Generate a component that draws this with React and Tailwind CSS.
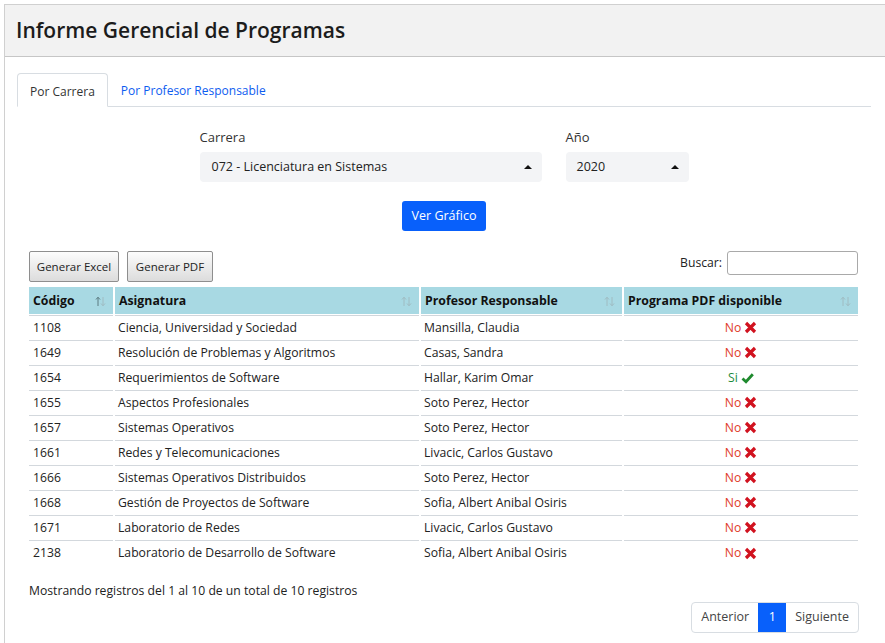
import React from "react";

const FONT = { fontFamily: '"Open Sans", "Noto Sans", sans-serif' };

const ROWS = [
  ["1108", "Ciencia, Universidad y Sociedad", "Mansilla, Claudia", false],
  ["1649", "Resolución de Problemas y Algoritmos", "Casas, Sandra", false],
  ["1654", "Requerimientos de Software", "Hallar, Karim Omar", true],
  ["1655", "Aspectos Profesionales", "Soto Perez, Hector", false],
  ["1657", "Sistemas Operativos", "Soto Perez, Hector", false],
  ["1661", "Redes y Telecomunicaciones", "Livacic, Carlos Gustavo", false],
  ["1666", "Sistemas Operativos Distribuidos", "Soto Perez, Hector", false],
  ["1668", "Gestión de Proyectos de Software", "Sofia, Albert Anibal Osiris", false],
  ["1671", "Laboratorio de Redes", "Livacic, Carlos Gustavo", false],
  ["2138", "Laboratorio de Desarrollo de Software", "Sofia, Albert Anibal Osiris", false],
];

function SortIcon({ active }) {
  return (
    <svg width="11" height="11" viewBox="0 0 11 11" className="shrink-0">
      <path d="M3 10V1.5M1 3.5L3 1.2L5 3.5" stroke={active ? "#5b7a80" : "#9fbcc2"} strokeWidth="1" fill="none" />
      <path d="M8 1v8.5M6 7.5L8 9.8L10 7.5" stroke="#9fbcc2" strokeWidth="1" fill="none" />
    </svg>
  );
}

function Cross() {
  return (
    <svg width="13" height="13" viewBox="0 0 13 13" className="inline-block">
      <path d="M2 2L11 11M11 2L2 11" stroke="#d1121f" strokeWidth="3.2" strokeLinecap="butt" />
    </svg>
  );
}

function Check() {
  return (
    <svg width="13" height="12" viewBox="0 0 13 12" className="inline-block">
      <path d="M1.5 6.5L5 9.8L11.8 2.2" stroke="#1f8a2e" strokeWidth="2.8" fill="none" />
    </svg>
  );
}

function Caret() {
  return <span className="w-0 h-0 border-x-[4px] border-x-transparent border-b-[4px] border-b-[#111]" />;
}

export default function App() {
  const heads = [
    ["Código", "w-[84px]", true],
    ["Asignatura", "w-[304px]", false],
    ["Profesor Responsable", "w-[201px]", false],
    ["Programa PDF disponible", "", false],
  ];

  return (
    <div className="min-h-screen bg-white pt-1 pl-1 overflow-hidden text-[#222]" style={FONT}>
      <div className="w-[900px] border-l border-t border-[#d0d0d0]">
        <div className="h-[52px] bg-[#f2f2f2] border-b border-[#c6c6c6] flex items-center px-[11px]">
          <h1 className="text-[21px] font-semibold text-[#1c1c1c]">Informe Gerencial de Programas</h1>
        </div>

        <div className="pl-[12px] pt-[16px] pb-4">
          <div className="w-[854px]">
            <div className="flex border-b border-[#d8dde2] h-[34px] text-[12px]">
              <div className="px-[12px] pt-[3px] flex items-center border border-[#d8dde2] border-b-white rounded-t-[4px] -mb-px bg-white text-[#333]">
                Por Carrera
              </div>
              <div className="px-[13px] pt-[3px] flex items-center text-[#0d5cf0]">Por Profesor Responsable</div>
            </div>

            <div className="flex justify-center gap-[24px] pt-[21px]">
              <div className="flex flex-col w-[342px]">
                <label className="text-[13px] text-[#333] h-[24px]">Carrera</label>
                <div className="h-[30px] bg-[#f3f4f6] rounded-[4px] flex items-center justify-between pl-[12px] pr-[10px] text-[12.5px]">
                  <span>072 - Licenciatura en Sistemas</span>
                  <Caret />
                </div>
              </div>
              <div className="flex flex-col w-[123px]">
                <label className="text-[13px] text-[#333] h-[24px]">Año</label>
                <div className="h-[30px] bg-[#f3f4f6] rounded-[4px] flex items-center justify-between pl-[11px] pr-[10px] text-[12.5px]">
                  <span>2020</span>
                  <Caret />
                </div>
              </div>
            </div>

            <div className="flex justify-center pt-[19px]">
              <button className="h-[30px] px-[10px] bg-[#0860fb] text-white text-[12.5px] rounded-[3px]">Ver Gráfico</button>
            </div>

            <div className="px-[12px] pt-[20px]">
              <div className="flex items-start justify-between">
                <div className="flex gap-[8px]">
                  <button className="h-[31px] w-[90px] border border-[#8e8e8e] rounded-[2px] bg-gradient-to-b from-[#fcfcfc] to-[#dcdcdc] text-[11.5px] text-[#222]">
                    Generar Excel
                  </button>
                  <button className="h-[31px] w-[86px] border border-[#8e8e8e] rounded-[2px] bg-gradient-to-b from-[#fcfcfc] to-[#dcdcdc] text-[11.5px] text-[#222]">
                    Generar PDF
                  </button>
                </div>
                <div className="flex items-center gap-[5px] text-[12.2px] mr-[1px]">
                  <span>Buscar:</span>
                  <div className="w-[131px] h-[24px] border border-[#a9a9a9] rounded-[3px] bg-white" />
                </div>
              </div>

              <table className="mt-[5px] w-[833px] -mx-[2px] border-separate border-spacing-x-[2px] border-spacing-y-0 text-[12.2px]">
                <thead>
                  <tr>
                    {heads.map(([h, w, active]) => (
                      <th key={h} className={`${w} h-[29px] bg-[#a8d9e3] border-b border-[#d0d6db] shadow-[inset_0_-1px_0_#fff] text-left font-bold text-[12.3px] text-[#111] p-0`}>
                        <div className="flex items-center justify-between pl-[4px] pr-[7px]">
                          <span>{h}</span>
                          <SortIcon active={active} />
                        </div>
                      </th>
                    ))}
                  </tr>
                </thead>
                <tbody>
                  {ROWS.map(([c, a, p, ok], i) => {
                    const b = i < ROWS.length - 1 ? "border-b border-[#d3d8dd]" : "";
                    return (
                      <tr key={c}>
                        <td className={`h-[25px] pl-[4px] ${b}`}>{c}</td>
                        <td className={`h-[25px] pl-[3px] ${b}`}>{a}</td>
                        <td className={`h-[25px] pl-[3px] ${b}`}>{p}</td>
                        <td className={`h-[25px] text-center ${b}`}>
                          {ok ? (
                            <span className="inline-flex items-center gap-[3px] text-[#1b8a3a]">Si <Check /></span>
                          ) : (
                            <span className="inline-flex items-center gap-[3px] text-[#e03a2a]">No <Cross /></span>
                          )}
                        </td>
                      </tr>
                    );
                  })}
                </tbody>
              </table>

              <div className="pt-[16px] text-[12.2px] text-[#222]">Mostrando registros del 1 al 10 de un total de 10 registros</div>

              <div className="flex justify-end pt-[2px]">
                <div className="flex h-[31px] border border-[#d8dde2] rounded-[4px] text-[12.5px] text-[#444] overflow-hidden">
                  <span className="px-[9px] flex items-center">Anterior</span>
                  <span className="w-[28px] flex items-center justify-center bg-[#0860fb] text-white">1</span>
                  <span className="px-[9px] flex items-center">Siguiente</span>
                </div>
              </div>
            </div>
          </div>
        </div>
      </div>
    </div>
  );
}
